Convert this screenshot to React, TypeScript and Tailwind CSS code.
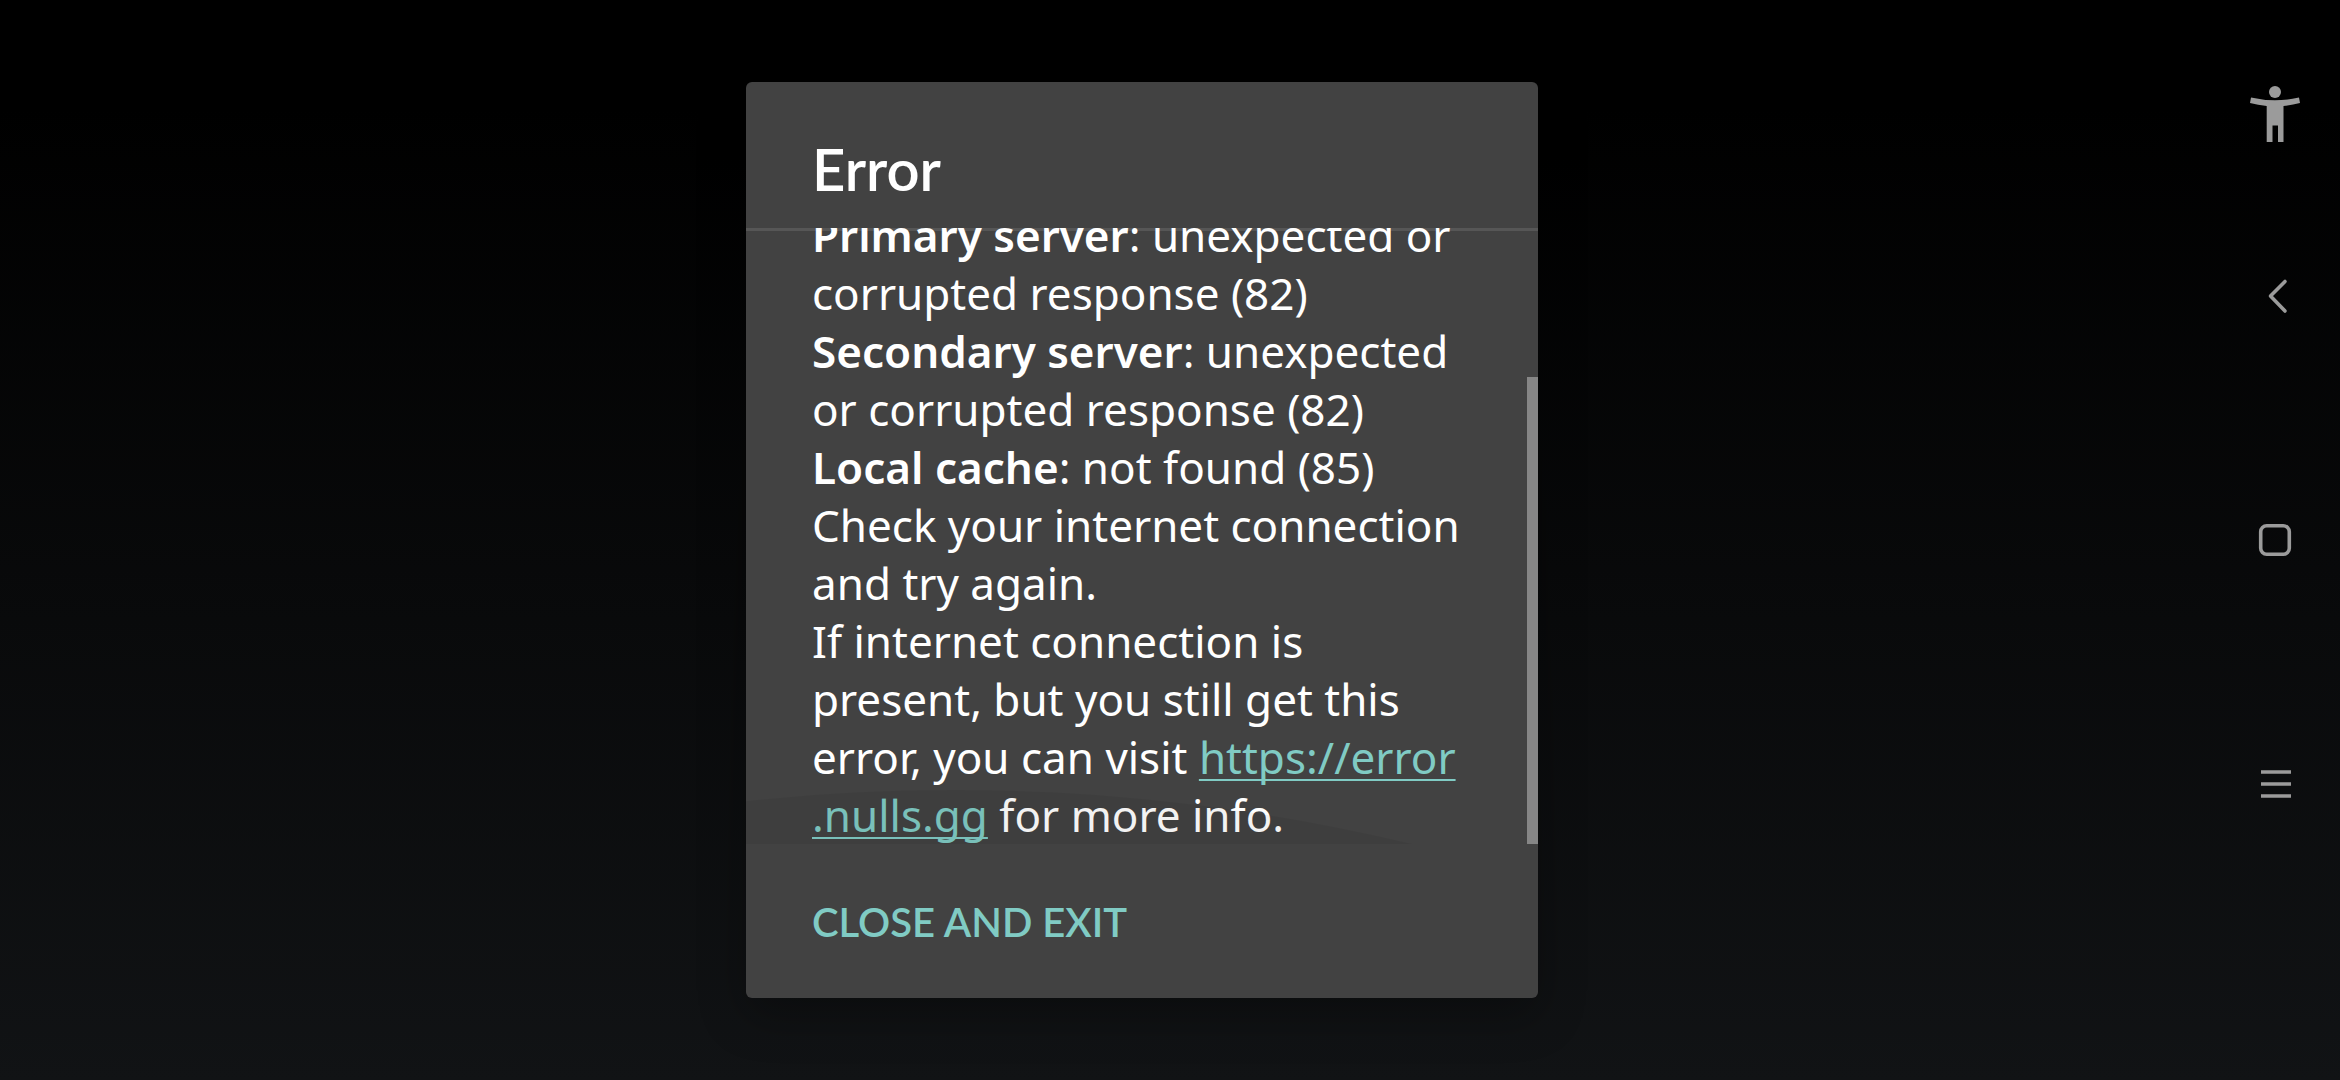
import type { ReactNode } from "react";

function NavButton({ label, children }: { label: string; children: ReactNode }) {
  return (
    <button
      type="button"
      aria-label={label}
      className="flex h-[244px] w-full items-center justify-center"
    >
      {children}
    </button>
  );
}

function SystemNav() {
  return (
    <nav
      aria-label="System navigation"
      className="flex w-[130px] shrink-0 flex-col items-center text-[#9b9b9b]"
    >
      <div className="flex flex-1 flex-col justify-end">
        <button type="button" aria-label="Accessibility" className="mb-8">
          <svg viewBox="0 0 56 56" className="size-14" fill="currentColor" aria-hidden="true">
            <circle cx="28" cy="6" r="6" />
            <path d="M4 11.5Q28 17 52 11.5L53 17Q45 19.200 36.500 20V56H31V39.500H25.500V56H19.700V20Q11 19.200 3 17Z" />
          </svg>
        </button>
      </div>
      <NavButton label="Back">
        <svg viewBox="0 0 56 56" className="size-14" fill="none" stroke="currentColor" aria-hidden="true">
          <path d="M38 13.500L23.500 28L38 43" strokeWidth="3.600" strokeLinecap="round" strokeLinejoin="round" />
        </svg>
      </NavButton>
      <NavButton label="Home">
        <svg viewBox="0 0 56 56" className="size-14" fill="none" stroke="currentColor" aria-hidden="true">
          <rect x="13.700" y="13.700" width="28.600" height="28.600" rx="6" strokeWidth="3.600" />
        </svg>
      </NavButton>
      <NavButton label="Recent apps">
        <svg viewBox="0 0 56 56" className="size-14" fill="currentColor" aria-hidden="true">
          <path d="M14 14.200h30v3.500h-30zM14 26.200h30v3.500h-30zM14 38.200h30v3.500h-30z" />
        </svg>
      </NavButton>
      <div className="flex-1" />
    </nav>
  );
}

export default function App() {
  return (
    <div className="flex h-screen bg-linear-to-b/srgb from-black from-10% to-[#111315] text-white">
      <main className="flex flex-1 justify-center py-[82px] pl-[74px]">
        <section
          role="dialog"
          aria-labelledby="dialog-title"
          className="flex w-[792px] flex-col overflow-hidden rounded-md bg-[#424242] shadow-[0_16px_48px_rgba(0,0,0,0.3)]"
        >
          <header className="px-[66px] pt-[55px] pb-[27px]">
            <h1
              id="dialog-title"
              className="font-['Lato',sans-serif] text-[58px] leading-[64px] font-semibold"
            >
              Error
            </h1>
          </header>

          <div className="relative flex min-h-0 flex-1 flex-col justify-end overflow-hidden px-[66px] font-['Noto_Sans',sans-serif] text-[44px] leading-[58px] shadow-[inset_0_3px_0_#565656]">
            <p>
              <strong className="font-semibold">Primary server</strong>: unexpected or
              <br />
              corrupted response (82)
            </p>
            <p>
              <strong className="font-semibold">Secondary server</strong>: unexpected
              <br />
              or corrupted response (82)
            </p>
            <p>
              <strong className="font-semibold">Local cache</strong>: not found (85)
            </p>
            <p>Check your internet connection and try again.</p>
            <p>
              If internet connection is
              <br />
              present, but you still get this
              <br />
              error, you can visit{" "}
              <a
                href="https://error.nulls.gg"
                className="text-[#80cbc4] underline decoration-2 underline-offset-5 [text-decoration-skip-ink:none]"
              >
                https://error
                <br />
                .nulls.gg
              </a>{" "}
              for more info.
            </p>
            <svg
              viewBox="0 0 792 54"
              className="pointer-events-none absolute bottom-0 left-0 w-full"
              aria-hidden="true"
            >
              <circle cx="209" cy="1960" r="1960" fill="#000" fillOpacity="0.05" />
            </svg>
            <div className="absolute top-[149px] right-0 bottom-0 w-[11px] bg-[#868686]" />
          </div>

          <footer className="px-[66px] pt-[54px] pb-[52px]">
            <button
              type="button"
              className="block font-['Lato',sans-serif] text-[40px] leading-[48px] font-semibold text-[#80cbc4]"
            >
              CLOSE AND EXIT
            </button>
          </footer>
        </section>
      </main>
      <SystemNav />
    </div>
  );
}
